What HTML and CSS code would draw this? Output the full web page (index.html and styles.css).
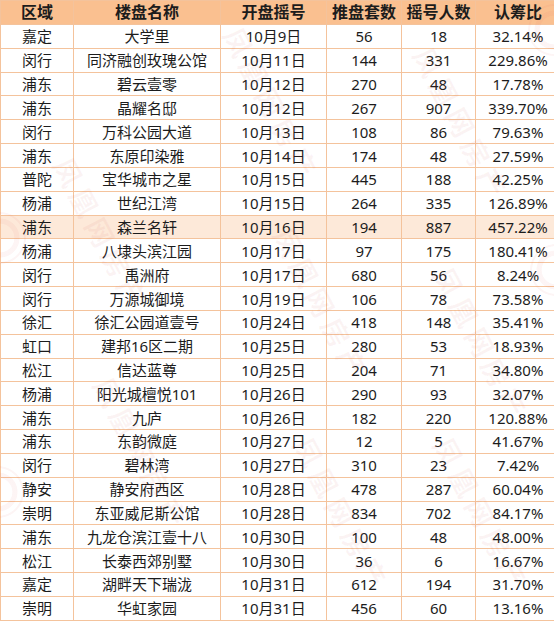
FILE: index.html
```html
<!DOCTYPE html>
<html lang="zh-CN">
<head>
    <meta charset="UTF-8">
    <meta name="viewport" content="width=device-width, initial-scale=1.0">
    <title>10月摇号楼盘</title>
    <link rel="stylesheet" href="styles.css">
</head>
<body>
    <div class="sheet">
        <table class="lottery">
            <thead>
                <tr>
                    <th class="c-area">区域</th>
                    <th class="c-name">楼盘名称</th>
                    <th class="c-date">开盘摇号</th>
                    <th class="c-units">推盘套数</th>
                    <th class="c-people">摇号人数</th>
                    <th class="c-ratio">认筹比</th>
                </tr>
            </thead>
            <tbody>
                <tr><td>嘉定</td><td>大学里</td><td>10月9日</td><td>56</td><td>18</td><td>32.14%</td></tr>
                <tr><td>闵行</td><td>同济融创玫瑰公馆</td><td>10月11日</td><td>144</td><td>331</td><td>229.86%</td></tr>
                <tr><td>浦东</td><td>碧云壹零</td><td>10月12日</td><td>270</td><td>48</td><td>17.78%</td></tr>
                <tr><td>浦东</td><td>晶耀名邸</td><td>10月12日</td><td>267</td><td>907</td><td>339.70%</td></tr>
                <tr><td>闵行</td><td>万科公园大道</td><td>10月13日</td><td>108</td><td>86</td><td>79.63%</td></tr>
                <tr><td>浦东</td><td>东原印染雅</td><td>10月14日</td><td>174</td><td>48</td><td>27.59%</td></tr>
                <tr><td>普陀</td><td>宝华城市之星</td><td>10月15日</td><td>445</td><td>188</td><td>42.25%</td></tr>
                <tr><td>杨浦</td><td>世纪江湾</td><td>10月15日</td><td>264</td><td>335</td><td>126.89%</td></tr>
                <tr class="hot"><td>浦东</td><td>森兰名轩</td><td>10月16日</td><td>194</td><td>887</td><td>457.22%</td></tr>
                <tr><td>杨浦</td><td>八埭头滨江园</td><td>10月17日</td><td>97</td><td>175</td><td>180.41%</td></tr>
                <tr><td>闵行</td><td>禹洲府</td><td>10月17日</td><td>680</td><td>56</td><td>8.24%</td></tr>
                <tr><td>闵行</td><td>万源城御境</td><td>10月19日</td><td>106</td><td>78</td><td>73.58%</td></tr>
                <tr><td>徐汇</td><td>徐汇公园道壹号</td><td>10月24日</td><td>418</td><td>148</td><td>35.41%</td></tr>
                <tr><td>虹口</td><td>建邦16区二期</td><td>10月25日</td><td>280</td><td>53</td><td>18.93%</td></tr>
                <tr><td>松江</td><td>信达蓝尊</td><td>10月25日</td><td>204</td><td>71</td><td>34.80%</td></tr>
                <tr><td>杨浦</td><td>阳光城檀悦101</td><td>10月26日</td><td>290</td><td>93</td><td>32.07%</td></tr>
                <tr><td>浦东</td><td>九庐</td><td>10月26日</td><td>182</td><td>220</td><td>120.88%</td></tr>
                <tr><td>浦东</td><td>东韵微庭</td><td>10月27日</td><td>12</td><td>5</td><td>41.67%</td></tr>
                <tr><td>闵行</td><td>碧林湾</td><td>10月27日</td><td>310</td><td>23</td><td>7.42%</td></tr>
                <tr><td>静安</td><td>静安府西区</td><td>10月28日</td><td>478</td><td>287</td><td>60.04%</td></tr>
                <tr><td>崇明</td><td>东亚威尼斯公馆</td><td>10月28日</td><td>834</td><td>702</td><td>84.17%</td></tr>
                <tr><td>浦东</td><td>九龙仓滨江壹十八</td><td>10月30日</td><td>100</td><td>48</td><td>48.00%</td></tr>
                <tr><td>松江</td><td>长泰西郊别墅</td><td>10月30日</td><td>36</td><td>6</td><td>16.67%</td></tr>
                <tr><td>嘉定</td><td>湖畔天下瑞泷</td><td>10月31日</td><td>612</td><td>194</td><td>31.70%</td></tr>
                <tr><td>崇明</td><td>华虹家园</td><td>10月31日</td><td>456</td><td>60</td><td>13.16%</td></tr>
            </tbody>
        </table>

        <!-- 水印 -->
        <div class="watermark">
            <span class="mark m1">凤凰网房产</span>
            <span class="mark m2">凤凰网房产</span>
            <span class="mark m3">凤凰网房产</span>
            <span class="mark m4">凤凰网房产</span>
            <span class="mark m5">凤凰网房产</span>
            <span class="mark m6">凤凰网房产</span>
            <span class="mark m7">凤凰网房产</span>
            <span class="mark m8">凤凰网房产</span>
            <span class="logo l1"></span>
            <span class="logo l2"></span>
            <span class="logo l3"></span>
            <span class="logo l4"></span>
        </div>
    </div>
</body>
</html>
```
FILE: styles.css
```css
body {
    margin: 0;
    background-color: #ffffff;
    font-family: "Noto Sans", "Noto Sans CJK SC", sans-serif;
    color: #1c1c1c;
}
.sheet {
    position: relative;
    width: 554px;
    overflow: hidden;
}
.lottery {
    width: 554px;
    border-collapse: collapse;
    table-layout: fixed;
    text-align: center;
}
.lottery th,
.lottery td {
    border: 1px solid #f4c39c;
    padding: 0;
    white-space: nowrap;
    overflow: hidden;
}
.lottery th {
    height: 23px;
    background-color: #fac090;
    font-size: 16px;
    font-weight: bold;
    line-height: 23px;
}
.lottery td {
    height: 22.84px;
    font-size: 15px;
    line-height: 22px;
}
.lottery tr.hot td {
    background-color: #fde9d9;
}
.c-area { width: 72px; }
.c-name { width: 146px; }
.c-date { width: 105px; }
.c-units { width: 74px; }
.c-people { width: 73px; }
.c-ratio { width: 84px; }

.watermark {
    position: absolute;
    top: 0;
    left: 0;
    right: 0;
    bottom: 0;
    pointer-events: none;
}
.mark {
    position: absolute;
    font-family: "Noto Sans CJK SC", sans-serif;
    font-size: 28px;
    font-weight: bold;
    letter-spacing: 6px;
    color: rgba(200, 70, 70, 0.06);
    transform: rotate(62deg);
    transform-origin: left top;
    white-space: nowrap;
}
.m1 { left: 250px; top: 20px; }
.m2 { left: 440px; top: 40px; }
.m3 { left: 80px; top: 150px; }
.m4 { left: 300px; top: 220px; }
.m5 { left: 460px; top: 260px; }
.m6 { left: 120px; top: 370px; }
.m7 { left: 320px; top: 430px; }
.m8 { left: 460px; top: 430px; }
.logo {
    position: absolute;
    width: 52px;
    height: 52px;
    border-radius: 50%;
    background: radial-gradient(circle, transparent 38%, rgba(220, 80, 80, 0.06) 40%, rgba(220, 80, 80, 0.06) 52%, transparent 54%, transparent 64%, rgba(220, 80, 80, 0.06) 66%, rgba(220, 80, 80, 0.06) 70%, transparent 72%);
}
.l1 { left: -26px; top: 212px; }
.l2 { left: 528px; top: 4px; }
.l3 { left: 530px; top: 244px; }
.l4 { left: -28px; top: 466px; }
```
